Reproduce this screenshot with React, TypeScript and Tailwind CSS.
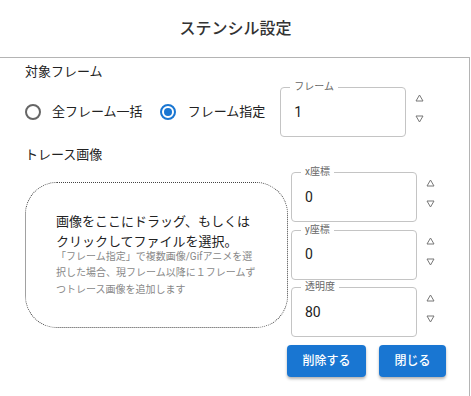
import React from "react";

const font = { fontFamily: 'Roboto, "Noto Sans CJK JP", sans-serif' };

function Arrows() {
  return (
    <div className="flex flex-col items-center gap-[13px] w-[10px] mt-[7px] text-[#777]">
      <svg width="9" height="8" viewBox="0 0 9 8">
        <path d="M4.5 1 L8 7 L1 7 Z" fill="none" stroke="currentColor" strokeWidth="1" strokeLinejoin="round" />
      </svg>
      <svg width="9" height="8" viewBox="0 0 9 8">
        <path d="M1 1 L8 1 L4.5 7 Z" fill="none" stroke="currentColor" strokeWidth="1" strokeLinejoin="round" />
      </svg>
    </div>
  );
}

function Field({ label, value }: { label: string; value: string }) {
  return (
    <div className="flex items-start">
      <div className="relative w-[126px] h-[50px] border border-[#c4c4c4] rounded-[4px] flex items-center pl-[13px] text-[14px] text-[#222]">
        <span className="absolute -top-[8px] left-[9px] px-[4px] bg-white text-[10px] leading-[14px] text-[#666]">
          {label}
        </span>
        {value}
      </div>
      <div className="ml-[8px]">
        <Arrows />
      </div>
    </div>
  );
}

export default function App() {
  return (
    <div className="w-[471px] h-[396px] bg-white overflow-hidden text-[#222]" style={font}>
      <div className="h-[57px] flex items-center justify-center text-[16px] font-medium text-[#333]">
        ステンシル設定
      </div>
      <div className="w-[470px] h-[339px] border-t border-r border-[#b4b4b4] pl-[25px] pt-[4px]">
        <div className="text-[13px] leading-[20px]">対象フレーム</div>
        <div className="flex items-start mt-[5px]">
          <div className="flex items-center h-[50px] text-[13px]">
            <span className="w-[16px] h-[16px] rounded-full border-2 border-[#666] box-border" />
            <span className="ml-[11px]">全フレーム一括</span>
            <span className="ml-[17px] w-[16px] h-[16px] rounded-full border-2 border-[#1976d2] flex items-center justify-center box-border">
              <span className="w-[8px] h-[8px] rounded-full bg-[#1976d2]" />
            </span>
            <span className="ml-[12px]">フレーム指定</span>
          </div>
          <div className="ml-[15px]">
            <Field label="フレーム" value="1" />
          </div>
        </div>
        <div className="text-[13px] leading-[20px] mt-[8px]">トレース画像</div>
        <div className="flex items-start">
          <div className="mt-[17px] w-[263px] h-[146px] border border-dotted border-[#444] rounded-[32px] flex flex-col justify-center pl-[30px]">
            <div className="text-[13px] leading-[20px] text-[#222] whitespace-nowrap">
              <div>画像をここにドラッグ、もしくは</div>
              <div>クリックしてファイルを選択。</div>
            </div>
            <div className="text-[10px] leading-[16.5px] text-[#888] whitespace-nowrap -mt-[3px]">
              <div>「フレーム指定」で複数画像/Gifアニメを選</div>
              <div>択した場合、現フレーム以降に１フレームず</div>
              <div>つトレース画像を追加します</div>
            </div>
          </div>
          <div className="ml-[3px] mt-[7px] flex flex-col gap-[7.5px]">
            <Field label="x座標" value="0" />
            <Field label="y座標" value="0" />
            <Field label="透明度" value="80" />
          </div>
        </div>
        <div className="flex gap-[13px] ml-[262px] mt-[8px]">
          <button className="w-[79px] h-[32px] rounded-[4px] bg-[#1976d2] text-white text-[12px] font-medium shadow-[0_2px_3px_rgba(0,0,0,0.3)]">
            削除する
          </button>
          <button className="w-[67px] h-[32px] rounded-[4px] bg-[#1976d2] text-white text-[12px] font-medium shadow-[0_2px_3px_rgba(0,0,0,0.3)]">
            閉じる
          </button>
        </div>
      </div>
    </div>
  );
}
